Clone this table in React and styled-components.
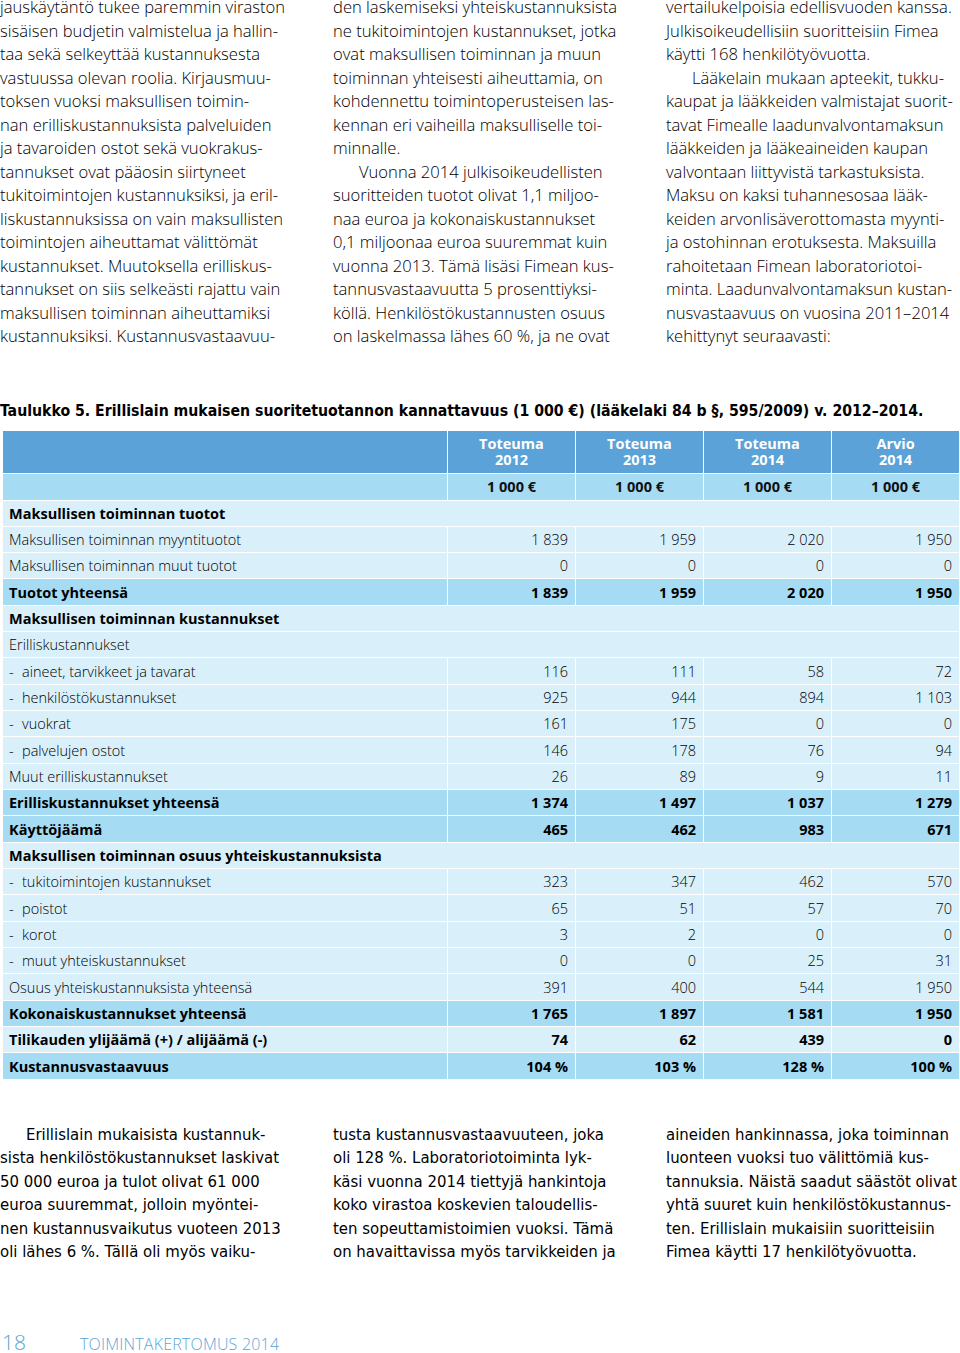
import React from 'react';
import styled, { createGlobalStyle } from 'styled-components';

const GlobalStyle = createGlobalStyle`
  html, body {
    margin: 0;
    padding: 0;
    background: #ffffff;
  }
  body {
    font-family: 'Open Sans', 'Noto Sans', sans-serif;
    color: #111111;
    overflow: hidden;
  }
`;

const topColumns = [
  [
    ['jauskäytäntö tukee paremmin viraston', 'sisäisen budjetin valmistelua ja hallin-', 'taa sekä selkeyttää kustannuksesta', 'vastuussa olevan roolia. Kirjausmuu-', 'toksen vuoksi maksullisen toimin-', 'nan erilliskustannuksista palveluiden', 'ja tavaroiden ostot sekä vuokrakus-', 'tannukset ovat pääosin siirtyneet', 'tukitoimintojen kustannuksiksi, ja eril-', 'liskustannuksissa on vain maksullisten', 'toimintojen aiheuttamat välittömät', 'kustannukset. Muutoksella erilliskus-', 'tannukset on siis selkeästi rajattu vain', 'maksullisen toiminnan aiheuttamiksi', 'kustannuksiksi. Kustannusvastaavuu-'],
  ],
  [
    ['den laskemiseksi yhteiskustannuksista', 'ne tukitoimintojen kustannukset, jotka', 'ovat maksullisen toiminnan ja muun', 'toiminnan yhteisesti aiheuttamia, on', 'kohdennettu toimintoperusteisen las-', 'kennan eri vaiheilla maksulliselle toi-', 'minnalle.'],
    ['Vuonna 2014 julkisoikeudellisten', 'suoritteiden tuotot olivat 1,1 miljoo-', 'naa euroa ja kokonaiskustannukset', '0,1 miljoonaa euroa suuremmat kuin', 'vuonna 2013. Tämä lisäsi Fimean kus-', 'tannusvastaavuutta 5 prosenttiyksi-', 'köllä. Henkilöstökustannusten osuus', 'on laskelmassa lähes 60 %, ja ne ovat'],
  ],
  [
    ['vertailukelpoisia edellisvuoden kanssa.', 'Julkisoikeudellisiin suoritteisiin Fimea', 'käytti 168 henkilötyövuotta.'],
    ['Lääkelain mukaan apteekit, tukku-', 'kaupat ja lääkkeiden valmistajat suorit-', 'tavat Fimealle laadunvalvontamaksun', 'lääkkeiden ja lääkeaineiden kaupan', 'valvontaan liittyvistä tarkastuksista.', 'Maksu on kaksi tuhannesosaa lääk-', 'keiden arvonlisäverottomasta myynti-', 'ja ostohinnan erotuksesta. Maksuilla', 'rahoitetaan Fimean laboratoriotoi-', 'minta. Laadunvalvontamaksun kustan-', 'nusvastaavuus on vuosina 2011–2014', 'kehittynyt seuraavasti:'],
  ],
];

const bottomColumns = [
  [
    ['Erillislain mukaisista kustannuk-', 'sista henkilöstökustannukset laskivat', '50 000 euroa ja tulot olivat 61 000', 'euroa suuremmat, jolloin myöntei-', 'nen kustannusvaikutus vuoteen 2013', 'oli lähes 6 %. Tällä oli myös vaiku-'],
  ],
  [
    ['tusta kustannusvastaavuuteen, joka', 'oli 128 %. Laboratoriotoiminta lyk-', 'käsi vuonna 2014 tiettyjä hankintoja', 'koko virastoa koskevien taloudellis-', 'ten sopeuttamistoimien vuoksi. Tämä', 'on havaittavissa myös tarvikkeiden ja'],
  ],
  [
    ['aineiden hankinnassa, joka toiminnan', 'luonteen vuoksi tuo välittömiä kus-', 'tannuksia. Näistä saadut säästöt olivat', 'yhtä suuret kuin henkilöstökustannus-', 'ten. Erillislain mukaisiin suoritteisiin', 'Fimea käytti 17 henkilötyövuotta.'],
  ],
];

// kind: section | plain | row | total | bold
const rows = [
  { label: 'Maksullisen toiminnan tuotot', kind: 'section' },
  { label: 'Maksullisen toiminnan myyntituotot', kind: 'row', values: ['1 839', '1 959', '2 020', '1 950'] },
  { label: 'Maksullisen toiminnan muut tuotot', kind: 'row', values: ['0', '0', '0', '0'] },
  { label: 'Tuotot yhteensä', kind: 'total', values: ['1 839', '1 959', '2 020', '1 950'] },
  { label: 'Maksullisen toiminnan kustannukset', kind: 'section' },
  { label: 'Erilliskustannukset', kind: 'plain' },
  { label: 'aineet, tarvikkeet ja tavarat', dash: true, kind: 'row', values: ['116', '111', '58', '72'] },
  { label: 'henkilöstökustannukset', dash: true, kind: 'row', values: ['925', '944', '894', '1 103'] },
  { label: 'vuokrat', dash: true, kind: 'row', values: ['161', '175', '0', '0'] },
  { label: 'palvelujen ostot', dash: true, kind: 'row', values: ['146', '178', '76', '94'] },
  { label: 'Muut erilliskustannukset', kind: 'row', values: ['26', '89', '9', '11'] },
  { label: 'Erilliskustannukset yhteensä', kind: 'total', values: ['1 374', '1 497', '1 037', '1 279'] },
  { label: 'Käyttöjäämä', kind: 'total', values: ['465', '462', '983', '671'] },
  { label: 'Maksullisen toiminnan osuus yhteiskustannuksista', kind: 'section' },
  { label: 'tukitoimintojen kustannukset', dash: true, kind: 'row', values: ['323', '347', '462', '570'] },
  { label: 'poistot', dash: true, kind: 'row', values: ['65', '51', '57', '70'] },
  { label: 'korot', dash: true, kind: 'row', values: ['3', '2', '0', '0'] },
  { label: 'muut yhteiskustannukset', dash: true, kind: 'row', values: ['0', '0', '25', '31'] },
  { label: 'Osuus yhteiskustannuksista yhteensä', kind: 'row', values: ['391', '400', '544', '1 950'] },
  { label: 'Kokonaiskustannukset yhteensä', kind: 'total', values: ['1 765', '1 897', '1 581', '1 950'] },
  { label: 'Tilikauden ylijäämä (+) / alijäämä (-)', kind: 'bold', values: ['74', '62', '439', '0'] },
  { label: 'Kustannusvastaavuus', kind: 'total', values: ['104 %', '103 %', '128 %', '100 %'] },
];

const headers = [
  ['Toteuma', '2012'],
  ['Toteuma', '2013'],
  ['Toteuma', '2014'],
  ['Arvio', '2014'],
];

const TextColumns = ({ columns, condensed }) => (
  <Columns>
    {columns.map((paras, i) => (
      <Column key={i} $condensed={condensed}>
        {paras.map((lines, j) => (
          <Para key={j} $indent={j > 0 || (condensed && i === 0)}>
            {lines.map((line, k) => (
              <Line key={k}>{line}</Line>
            ))}
          </Para>
        ))}
      </Column>
    ))}
  </Columns>
);

const App = () => {
  return (
    <Page>
      <GlobalStyle />
      <TopText>
        <TextColumns columns={topColumns} />
      </TopText>

      <Caption>
        Taulukko 5. Erillislain mukaisen suoritetuotannon kannattavuus (1 000 €) (lääkelaki 84 b §, 595/2009) v. 2012–2014.
      </Caption>

      <Table>
        <HeadRow $tall>
          <HeadCell />
          {headers.map(([a, b]) => (
            <HeadCell key={a + b}>
              <span>{a}</span>
              <span>{b}</span>
            </HeadCell>
          ))}
        </HeadRow>
        <HeadRow>
          <UnitCell />
          {headers.map(([a, b]) => (
            <UnitCell key={a + b}>1 000 €</UnitCell>
          ))}
        </HeadRow>

        {rows.map((row) =>
          row.values ? (
            <BodyRow key={row.label}>
              <LabelCell $kind={row.kind}>
                {row.dash && <Dash>-</Dash>}
                {row.label}
              </LabelCell>
              {row.values.map((v, i) => (
                <NumCell key={i} $kind={row.kind}>
                  {v}
                </NumCell>
              ))}
            </BodyRow>
          ) : (
            <BodyRow key={row.label} $span>
              <LabelCell $kind={row.kind}>{row.label}</LabelCell>
            </BodyRow>
          )
        )}
      </Table>

      <BottomText>
        <TextColumns columns={bottomColumns} condensed />
      </BottomText>

      <Footer>
        <PageNo>18</PageNo>
        <FooterTitle>TOIMINTAKERTOMUS 2014</FooterTitle>
      </Footer>
    </Page>
  );
};

export default App;

// === styles ===
const headBlue = '#5aa2d7';
const midBlue = '#a6dbf4';
const lightBlue = '#d9f0fb';

const Page = styled.div`
  width: 960px;
  height: 1353px;
  overflow: hidden;
`;

const TopText = styled.section`
  margin-top: -5px;
`;

const Columns = styled.div`
  display: grid;
  grid-template-columns: 300px 300px 1fr;
  column-gap: 33px;
`;

const Column = styled.div`
  font-family: ${({ $condensed }) =>
    $condensed
      ? "'DejaVu Sans Condensed', 'Liberation Sans Narrow', 'Open Sans', sans-serif"
      : "'Open Sans', 'Noto Sans', sans-serif"};
  font-stretch: ${({ $condensed }) => ($condensed ? 'condensed' : 'normal')};
  font-weight: ${({ $condensed }) => ($condensed ? 400 : 300)};
  font-size: 16.6px;
  line-height: 23.5px;
  color: #000000;
`;

const Para = styled.div`
  & > div:first-child {
    padding-left: ${({ $indent }) => ($indent ? '26px' : '0')};
  }
`;

const Line = styled.div`
  white-space: nowrap;
`;

const Caption = styled.div`
  margin-top: 53px;
  font-family: 'DejaVu Sans Condensed', 'Liberation Sans Narrow', 'Open Sans', sans-serif;
  font-stretch: condensed;
  font-weight: 700;
  font-size: 15.7px;
  line-height: 20px;
  white-space: nowrap;
  color: #000000;
`;

const Table = styled.div`
  margin: 10px 0 0 3px;
  width: 956px;
  display: flex;
  flex-direction: column;
  gap: 1px;
  font-family: 'Open Sans', 'Noto Sans', sans-serif;
  font-size: 14.5px;
`;

const HeadRow = styled.div`
  display: grid;
  grid-template-columns: 444px repeat(4, 1fr);
  column-gap: 1px;
  height: ${({ $tall }) => ($tall ? '42px' : '26px')};
`;

const HeadCell = styled.div`
  background: ${headBlue};
  color: #ffffff;
  font-weight: 700;
  font-size: 14.5px;
  line-height: 16.5px;
  padding-top: 1px;
  display: flex;
  flex-direction: column;
  align-items: center;
  justify-content: center;
`;

const UnitCell = styled.div`
  background: ${midBlue};
  font-weight: 700;
  display: flex;
  align-items: center;
  justify-content: center;
  color: #111111;
`;

const BodyRow = styled.div`
  display: grid;
  grid-template-columns: ${({ $span }) => ($span ? '1fr' : '444px repeat(4, 1fr)')};
  column-gap: 1px;
  height: 25.33px;
`;

const cellBg = (kind) => (kind === 'total' ? midBlue : lightBlue);
const cellWeight = (kind) =>
  kind === 'total' || kind === 'section' || kind === 'bold' ? 700 : 300;

const LabelCell = styled.div`
  background: ${({ $kind }) => cellBg($kind)};
  font-weight: ${({ $kind }) => cellWeight($kind)};
  display: flex;
  align-items: center;
  padding-left: 6px;
  white-space: nowrap;
  color: #000000;
`;

const Dash = styled.span`
  display: inline-block;
  width: 13px;
`;

const NumCell = styled.div`
  background: ${({ $kind }) => cellBg($kind)};
  font-weight: ${({ $kind }) => cellWeight($kind)};
  display: flex;
  align-items: center;
  justify-content: flex-end;
  padding-right: 7px;
  color: #000000;
`;

const BottomText = styled.section`
  margin-top: 44px;
`;

const Footer = styled.footer`
  margin-top: 64px;
  display: flex;
  align-items: baseline;
  padding-left: 2px;
  color: #5aa6d6;
  font-family: 'Open Sans', 'Noto Sans', sans-serif;
  font-weight: 300;
`;

const PageNo = styled.span`
  font-size: 21px;
  width: 78px;
`;

const FooterTitle = styled.span`
  font-size: 16px;
  letter-spacing: 0.2px;
`;
